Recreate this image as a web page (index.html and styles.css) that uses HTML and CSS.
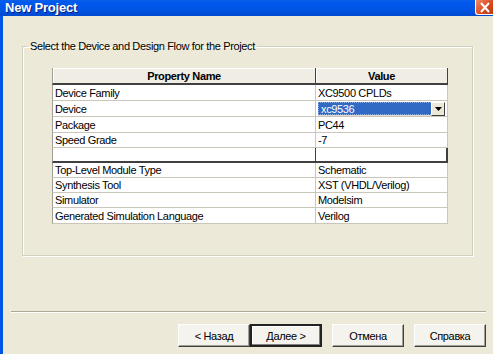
FILE: index.html
```html
<!DOCTYPE html>
<html>
<head>
	<title>New Project</title>
	<meta name="viewport" content="width=device-width,initial-scale=1.0">
	<link rel="stylesheet" href="styles.css">
</head>
<body>
<div class="window">
	<div class="titlebar">
		<span class="title">New Project</span>
		<div class="close_btn">
			<svg width="16" height="13" viewBox="0 0 16 13"><path d="M4 2 L12 11 M12 2 L4 11" stroke="#fff" stroke-width="2" fill="none"/></svg>
		</div>
	</div>
	<div class="client">
		<fieldset class="group">
			<legend>Select the Device and Design Flow for the Project</legend>
			<table class="props">
				<tr class="head"><th class="c_name">Property Name</th><th class="c_val">Value</th></tr>
				<tr class="r1"><td>Device Family</td><td>XC9500 CPLDs</td></tr>
				<tr class="r2"><td>Device</td><td class="combo_cell">
					<div class="combo">
						<span class="combo_text">xc9536</span>
						<span class="combo_btn"><svg width="7" height="4" viewBox="0 0 7 4"><path d="M0 0 H7 L3.5 4 Z" fill="#000"/></svg></span>
					</div>
				</td></tr>
				<tr class="r3"><td>Package</td><td>PC44</td></tr>
				<tr class="r4"><td>Speed Grade</td><td>-7</td></tr>
				<tr class="r5 divider"><td></td><td class="edit_cell"></td></tr>
				<tr class="r6"><td>Top-Level Module Type</td><td>Schematic</td></tr>
				<tr class="r7"><td>Synthesis Tool</td><td>XST (VHDL/Verilog)</td></tr>
				<tr class="r8"><td>Simulator</td><td>Modelsim</td></tr>
				<tr class="r9"><td>Generated Simulation Language</td><td>Verilog</td></tr>
			</table>
		</fieldset>
		<div class="sep"></div>
		<div class="buttons">
			<button class="btn">&lt; Назад</button>
			<button class="btn default">Далее &gt;</button>
			<button class="btn gap">Отмена</button>
			<button class="btn gap">Справка</button>
		</div>
	</div>
</div>
</body>
</html>
```
FILE: styles.css
```css
*{margin: 0;padding: 0;box-sizing: border-box;}
body{width: 493px;height: 354px;overflow: hidden;background: #ece9d8;font-family: "Liberation Sans", Arial, sans-serif;font-size: 11px;letter-spacing: -0.35px;color: #000;}
.window{width: 493px;height: 354px;display: flex;flex-direction: column;}
.titlebar{height: 16px;display: flex;justify-content: space-between;align-items: flex-start;background: linear-gradient(#0a5fe8 0px, #0058ee 3px, #0054e3 10px, #0049d0 16px);}
.title{color: #fff;font-weight: bold;font-size: 13px;letter-spacing: -0.2px;line-height: 15px;padding-left: 5px;text-shadow: 1px 1px 0 #0a1e74;}
.close_btn{width: 18px;height: 15px;background: linear-gradient(135deg, #f08a66, #d8461c 60%, #c23a10);border-left: 1px solid #fff;border-bottom: 1px solid #fff;border-bottom-left-radius: 3px;display: flex;align-items: center;justify-content: center;}
.client{flex: 1;border-left: 3px solid #0055e5;display: flex;flex-direction: column;}
.group{margin: 24px 0 0 19px;width: 451px;height: 216px;border: 1px solid #d0d0bf;box-shadow: inset 1px 1px 0 #fff, 1px 1px 0 #fff;padding: 15px 0 0 0;}
.group legend{margin-left: 5px;padding: 0 2px;line-height: 13px;}
.props{margin-left: 29px;border-spacing: 0;border-collapse: separate;width: 396px;table-layout: fixed;}
.props th{height: 17px;font-weight: bold;text-align: center;background: #efede4;border-right: 1px solid #404040;border-bottom: 2px solid #404040;box-shadow: inset 1px 1px 0 #fff;line-height: 14px;padding: 0;}
.props th.c_name{width: 264px;border-left: 1px solid #a09f94;}
.props th.c_val{width: 132px;}
.props td{background: #fff;height: 15px;line-height: 14px;padding: 0 2px;border-right: 1px solid #cac7ba;border-bottom: 1px solid #cac7ba;white-space: nowrap;overflow: hidden;}
.props td:first-child{border-left: 1px solid #a09f94;}
.props tr.r1 td, .props tr.r3 td, .props tr.r9 td{height: 16px;}
.props tr.divider td{border-bottom: 2px solid #404040;}
.props tr.divider td:first-child{border-right: 1px solid #404040;}
.props tr.divider td.edit_cell{border-right: 2px solid #404040;}
.props td.combo_cell{padding: 1px 2px 0 2px;}
.combo{display: flex;height: 14px;border-bottom: 1px solid #e0ddd2;}
.combo_text{flex: 1;background: #316ac5;color: #fff;line-height: 13px;padding-left: 2px;border: 1px dotted #8fb0e6;border-right: none;}
.combo_btn{width: 14px;height: 14px;background: #ece9d8;border: 1px solid;border-color: #fff #404040 #404040 #fff;display: flex;align-items: center;justify-content: center;}
.sep{margin: 55px 7px 0 8px;height: 2px;border-top: 1px solid #aca899;border-bottom: 1px solid #fff;}
.buttons{margin-top: 11px;padding-right: 7px;display: flex;justify-content: flex-end;}
.btn{width: 72px;height: 23px;font-family: "Liberation Sans", Arial, sans-serif;font-size: 11px;letter-spacing: -0.35px;color: #000;background: #f4f3ee;border: 1px solid;border-color: #fff #404040 #404040 #fff;box-shadow: inset -1px -1px 0 #a09f94;}
.btn.default{border: 2px solid #222;box-shadow: inset -1px -1px 0 #808080, inset 1px 1px 0 #fff;}
.btn.gap{margin-left: 10px;}
```
